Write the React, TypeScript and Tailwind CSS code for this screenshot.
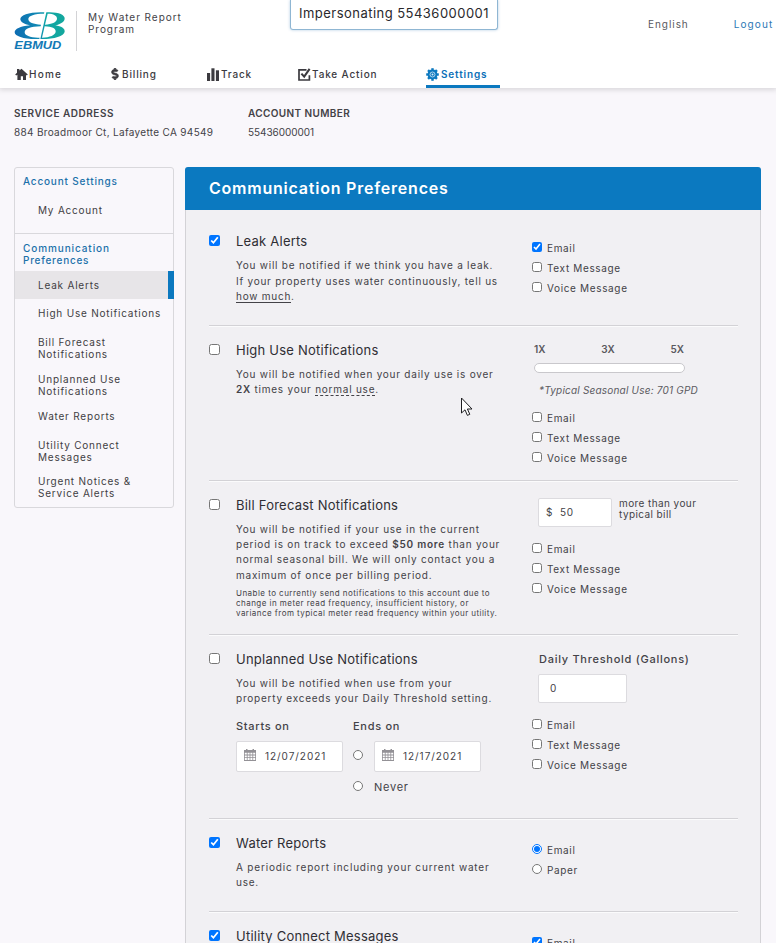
import type { ReactNode } from "react";
import { FaDollarSign } from "react-icons/fa";

const CHECK = "block m-0 h-[11px] w-[11px] shrink-0 accent-[#0075ff]";
const OPTION = "block m-0 h-[10px] w-[10px] shrink-0 accent-[#0075ff]";

function Logo() {
  return (
    <svg className="h-[40px] w-[52px]" viewBox="42 33 156 120">
      <defs>
        <linearGradient id="water" gradientUnits="userSpaceOnUse" x1="44" y1="0" x2="196" y2="0">
          <stop offset="0" stopColor="#0d6cb2" />
          <stop offset="0.5" stopColor="#118cb4" />
          <stop offset="0.62" stopColor="#10a6a6" />
          <stop offset="1" stopColor="#14a79c" />
        </linearGradient>
      </defs>
      <path
        fill="url(#water)"
        d="M133 37 C90 35 61 45 61 57 C61 66 72 72 90 76 C60 79 44 87 44 97 C44 110 76 119 118 117 L119 113 C92 114 74 107 74 97 C74 86 92 80 122 79 L123 74 C100 73 85 67 85 57 C85 47 104 41 132 41 Z"
      />
      <path
        fill="url(#water)"
        fillRule="evenodd"
        d="M139 37 C174 35 195 44 194 56 C193 66 182 72 166 76 C184 79 195 85 194 95 C192 109 160 118 121 117 Z M143 41 L135 74 C156 73 169 67 171 57 C172 47 161 41 143 41 Z M134 79 L126 113 C150 112 166 105 167 95 C168 85 156 80 134 79 Z"
      />
      <text
        x="43"
        y="148"
        textLength="141"
        lengthAdjust="spacingAndGlyphs"
        fontFamily="Liberation Sans, sans-serif"
        fontWeight="700"
        fontStyle="italic"
        fontSize="31"
        fill="#1279b5"
      >
        EBMUD
      </text>
    </svg>
  );
}

function HomeIcon() {
  return (
    <svg className="h-[13px] w-[13px]" viewBox="0 0 13 13" fill="#3b3a3f">
      <path d="M2 1 H4.4 V2.6 L6.5 .8 L12.8 6.4 L11.8 7.4 L11 6.8 V12 H8 V8.2 H5.8 V12 H2.4 V6.8 L1.2 7.4 L.2 6.4 L2 4.7 Z" />
    </svg>
  );
}

function Bars() {
  return (
    <svg className="h-[13px] w-3" viewBox="0 0 12 13" fill="#3b3a3f">
      <rect x="0" y="5" width="3.1" height="8" />
      <rect x="4.4" y="0.3" width="3.1" height="12.7" />
      <rect x="8.9" y="2.3" width="3.1" height="10.7" />
    </svg>
  );
}

function CheckBoxIcon() {
  return (
    <svg className="h-[13px] w-[13px]" viewBox="0 0 13 13" fill="none" stroke="#3b3a3f">
      <path d="M8.5 1.9 H1 V12 H11.4 V7.2" strokeWidth="1.7" />
      <path d="M3.4 5.6 L6.2 8.6 L11.6 .9" strokeWidth="2.1" />
    </svg>
  );
}

function GearIcon() {
  return (
    <svg className="h-[13px] w-[13px]" viewBox="-6.5 -6.5 13 13">
      <g fill="#0b78bf">
        <circle r="4.9" />
        <rect x="-1.2" y="-6.3" width="2.4" height="12.6" />
        <rect x="-6.3" y="-1.2" width="12.6" height="2.4" />
        <rect x="-1.2" y="-6.3" width="2.4" height="12.6" transform="rotate(45)" />
        <rect x="-1.2" y="-6.3" width="2.4" height="12.6" transform="rotate(-45)" />
      </g>
      <circle r="2.5" fill="none" stroke="#d9ebf6" strokeWidth=".8" />
      <circle r="1" fill="#d9ebf6" />
    </svg>
  );
}

function Calendar() {
  return (
    <svg className="-mt-[3px] h-3 w-3 shrink-0" viewBox="0 0 12 12">
      <path fill="#939196" d="M0 1h12v11H0z M2 0h1.5v2H2z M8.5 0H10v2H8.5z" />
      <path
        fill="#fff"
        d="M.8 3.8h2v1.8h-2z M3.6 3.8h2v1.8h-2z M6.4 3.8h2v1.8h-2z M9.2 3.8h2v1.8h-2z M.8 6.4h2v1.8h-2z M3.6 6.4h2v1.8h-2z M6.4 6.4h2v1.8h-2z M9.2 6.4h2v1.8h-2z M.8 9.1h2v1.9h-2z M3.6 9.1h2v1.9h-2z M6.4 9.1h2v1.9h-2z M9.2 9.1h2v1.9h-2z"
      />
    </svg>
  );
}

function Options({ items, checked, radio, group }: { items: string[]; checked?: string; radio?: boolean; group: string }) {
  return (
    <div className="flex flex-col">
      {items.map((item) => (
        <label key={item} className="flex h-5 items-start gap-[5px]">
          <input
            type={radio ? "radio" : "checkbox"}
            name={group}
            defaultChecked={item === checked}
            className={`${OPTION} mt-[4px]`}
          />
          <span className="leading-5 tracking-[0.65px]">{item}</span>
        </label>
      ))}
    </div>
  );
}

function Section({
  title,
  checked,
  className,
  side,
  children,
}: {
  title: string;
  checked?: boolean;
  className: string;
  side: ReactNode;
  children?: ReactNode;
}) {
  return (
    <section className={`flex shrink-0 border-b border-[#d3d2d6] shadow-[0_1px_0_#fbfbfc] ${className}`}>
      <input type="checkbox" defaultChecked={checked} className={`${CHECK} mt-[18px]`} />
      <div className="ml-4 w-[296px] shrink-0">
        <h2 className="pt-[14px] text-[13px] leading-5 font-normal tracking-[0.23px] text-[#2f2e33]">{title}</h2>
        <div className="whitespace-nowrap pt-[7px] leading-[15.2px] tracking-[0.76px]">{children}</div>
      </div>
      <div className="w-[206px] shrink-0">{side}</div>
    </section>
  );
}

const CHANNELS = ["Email", "Text Message", "Voice Message"];
const NAV = "flex items-center gap-[2px] h-[28px]";

function DateBox({ value }: { value: string }) {
  return (
    <div className="flex h-[31px] w-[107px] items-center rounded-[2px] border border-[#dcdbdf] bg-white pl-[7px]">
      <Calendar />
      <span className="ml-[9px] tracking-[0.95px]">{value}</span>
    </div>
  );
}

function SideLink({ children, className }: { children: ReactNode; className: string }) {
  return <a className={`block pl-[23px] leading-3 tracking-[0.79px] text-[#3f3e43] ${className}`}>{children}</a>;
}

export default function App() {
  return (
    <div className="flex h-[943px] w-[776px] flex-col overflow-hidden bg-[#f9f7fb] font-[Inter,'Open_Sans',sans-serif] text-[10px] text-[#434247]">
      <header className="flex h-[88px] shrink-0 flex-col bg-white shadow-[0_1px_5px_1px_rgba(0,0,0,0.13)]">
        <div className="flex h-[60px] items-start">
          <div className="ml-[14px] mt-[11px]">
            <Logo />
          </div>
          <div className="ml-[10px] mt-[11px] h-10 w-px bg-[#d3d3d6]" />
          <div className="ml-[11px] mt-[11px] w-[202px] leading-3 tracking-[0.95px]">
            My Water Report
            <br />
            Program
          </div>
          <div className="flex h-[30px] w-[208px] shrink-0 items-center justify-center rounded-b-[3px] border border-t-0 border-[#8fb6d3] pb-[2px] text-[13px] tracking-[0.47px] text-[#29282c] shadow-[0_0_3px_rgba(80,140,190,0.45)]">
            Impersonating 55436000001
          </div>
          <a className="ml-[150px] mt-[18px] leading-3 tracking-[0.95px] text-[#5a595e]">English</a>
          <a className="ml-[45px] mt-[18px] leading-3 tracking-[1.1px] text-[#2d78b5]">Logout</a>
        </div>
        <nav className="flex font-medium tracking-[0.84px] text-[#3b3a3f]">
          <a className={`${NAV} ml-[15px] w-[94px] gap-px tracking-[1.2px]`}>
            <HomeIcon />
            Home
          </a>
          <a className={`${NAV} w-[98px] gap-px`}>
            <FaDollarSign size={12} stroke="#3b3a3f" strokeWidth={30} />
            Billing
          </a>
          <a className={`${NAV} w-[91px]`}>
            <Bars />
            Track
          </a>
          <a className={`${NAV} w-[128px] gap-px`}>
            <CheckBoxIcon />
            Take Action
          </a>
          <a className={`${NAV} w-[74px] border-b-[3px] border-[#0b78bf] pt-[3px] font-semibold text-[#0b6fb8]`}>
            <GearIcon />
            Settings
          </a>
        </nav>
      </header>

      <div className="flex h-[79px] shrink-0 pl-[14px] pt-[19px]">
        <div className="w-[234px]">
          <div className="leading-3 font-semibold tracking-[0.52px]">SERVICE ADDRESS</div>
          <div className="mt-[7px] leading-3 tracking-[0.32px]">884 Broadmoor Ct, Lafayette CA 94549</div>
        </div>
        <div>
          <div className="leading-3 font-semibold tracking-[0.38px]">ACCOUNT NUMBER</div>
          <div className="mt-[7px] leading-3 tracking-[-0.05px]">55436000001</div>
        </div>
      </div>

      <div className="flex min-h-0 flex-1 items-start">
        <aside className="ml-[14px] flex h-[341px] w-[160px] flex-col rounded-[3px] border border-[#d9d8dc]">
          <div className="h-[66px] border-b border-[#d9d8dc] pt-[7px]">
            <div className="pl-[8px] leading-3 font-medium tracking-[0.82px] text-[#1c71aa]">Account Settings</div>
            <SideLink className="mt-[17px]">My Account</SideLink>
          </div>
          <div className="pl-[8px] pt-[8px] leading-3 font-medium tracking-[0.9px] text-[#1c71aa]">
            Communication
            <br />
            <span className="tracking-[0.75px]">Preferences</span>
          </div>
          <div className="-mr-px mt-[5px] flex h-[28px] shrink-0 items-center justify-between bg-[#e7e5e8]">
            <SideLink className="">Leak Alerts</SideLink>
            <div className="h-full w-[6px] bg-[#0b78bf]" />
          </div>
          <SideLink className="mt-[8px]">High Use Notifications</SideLink>
          <SideLink className="mt-[17px]">
            Bill Forecast
            <br />
            Notifications
          </SideLink>
          <SideLink className="mt-[13px]">
            Unplanned Use
            <br />
            Notifications
          </SideLink>
          <SideLink className="mt-[13px]">Water Reports</SideLink>
          <SideLink className="mt-[17px]">
            Utility Connect
            <br />
            Messages
          </SideLink>
          <SideLink className="mt-[12px]">
            Urgent Notices &amp;
            <br />
            Service Alerts
          </SideLink>
        </aside>

        <main className="ml-[11px] flex h-[776px] w-[576px] shrink-0 flex-col overflow-hidden rounded-t-[3px] bg-[#f1f0f3]">
          <h1 className="flex h-[43px] shrink-0 items-center bg-[#0b79c0] pb-px pl-[24px] text-[16px] font-semibold tracking-[0.78px] text-white">
            Communication Preferences
          </h1>
          <div className="flex min-h-0 flex-1 flex-col border-x border-[#d3d2d6] pl-[23px] pr-[22px] pt-[7px]">
            <Section
              title="Leak Alerts"
              checked
              className="h-[109px]"
              side={
                <div className="pt-[21px]">
                  <Options items={CHANNELS} checked="Email" group="leak" />
                </div>
              }
            >
              You will be notified if we think you have a leak.
              <br />
              <span className="relative top-px">If your property uses water continuously, tell us</span>
              <br />
              <span className="relative top-px">
                <span className="inline-block border-b border-[#434247] leading-[11px]">how much</span>.
              </span>
            </Section>

            <Section
              title="High Use Notifications"
              className="h-[155px]"
              side={
                <div className="pt-[17px]">
                  <div className="flex w-[152px] justify-between pl-[2px] leading-3 font-semibold text-[#59585d]">
                    <span>1X</span>
                    <span>3X</span>
                    <span>5X</span>
                  </div>
                  <div className="ml-[2px] mt-[8px] h-[10px] w-[151px] rounded-full border border-[#c9c8cc] bg-white" />
                  <div className="ml-[7px] mt-[10px] h-[14px] leading-[14px] italic tracking-[0.2px] text-[#5b5a5f]">
                    *Typical Seasonal Use: 701 GPD
                  </div>
                  <div className="pt-[11px]">
                    <Options items={CHANNELS} group="high" />
                  </div>
                </div>
              }
            >
              You will be notified when your daily use is over
              <br />
              <b className="font-semibold">2X</b> times your{" "}
              <span className="inline-block border-b border-dashed border-[#434247] leading-[11px]">normal use</span>.
            </Section>

            <Section
              title="Bill Forecast Notifications"
              className="h-[154px]"
              side={
                <div className="pt-[17px]">
                  <div className="flex">
                    <div className="ml-[6px] flex h-[29px] w-[74px] items-center gap-[7px] rounded-[2px] border border-[#dcdbdf] bg-white pl-[7px] tracking-[0.6px]">
                      <span>$</span>
                      <span>50</span>
                    </div>
                    <div className="ml-[7px] leading-[11px] tracking-[0.41px]">
                      more than your
                      <br />
                      typical bill
                    </div>
                  </div>
                  <div className="pt-[12px]">
                    <Options items={CHANNELS} group="bill" />
                  </div>
                </div>
              }
            >
              You will be notified if your use in the current
              <br />
              period is on track to exceed <b className="font-semibold">$50 more</b> than your
              <br />
              normal seasonal bill. We will only contact you a
              <br />
              maximum of once per billing period.
              <div className="mt-[5px] text-[8px] leading-[10px] tracking-[0.46px]">
                Unable to currently send notifications to this account due to
                <br />
                change in meter read frequency, insufficient history, or
                <br />
                variance from typical meter read frequency within your utility.
              </div>
            </Section>

            <Section
              title="Unplanned Use Notifications"
              className="h-[184px]"
              side={
                <div className="pt-[16px]">
                  <div className="ml-[7px] text-[11px] leading-4 font-medium tracking-[0.73px]">
                    Daily Threshold (Gallons)
                  </div>
                  <div className="ml-[6px] mt-[7px] flex h-[29px] w-[89px] items-center rounded-[2px] border border-[#dcdbdf] bg-white pl-[11px]">
                    0
                  </div>
                  <div className="pt-[12px]">
                    <Options items={CHANNELS} group="unplanned" />
                  </div>
                </div>
              }
            >
              You will be notified when use from your
              <br />
              property exceeds your Daily Threshold setting.
              <div className="mt-[12px] flex text-[11px] leading-4 font-medium tracking-[0.7px]">
                <span className="w-[117px]">Starts on</span>
                <span>Ends on</span>
              </div>
              <div className="mt-[7px] flex items-center">
                <DateBox value="12/07/2021" />
                <input type="radio" name="end" className={`${OPTION} -mt-[4px] ml-[10px]`} />
                <div className="ml-[11px]">
                  <DateBox value="12/17/2021" />
                </div>
              </div>
              <div className="mt-[7px] flex items-center">
                <input type="radio" name="end" className={`${OPTION} -mt-[2px] ml-[117px]`} />
                <span className="ml-[11px] text-[11px] leading-4 tracking-[0.74px]">Never</span>
              </div>
            </Section>

            <Section
              title="Water Reports"
              checked
              className="h-[93px]"
              side={
                <div className="pt-[21px]">
                  <Options items={["Email", "Paper"]} checked="Email" radio group="reports" />
                </div>
              }
            >
              <span className="tracking-[0.82px]">A periodic report including your current water</span>
              <br />
              use.
            </Section>

            <Section
              title="Utility Connect Messages"
              checked
              className="h-[109px]"
              side={
                <div className="pt-[21px]">
                  <Options items={CHANNELS} checked="Email" group="utility" />
                </div>
              }
            />
          </div>
        </main>
      </div>

      <svg className="absolute left-[460px] top-[397px] h-5 w-[14px]" viewBox="0 0 14 20">
        <path
          d="M1.5 1 V16 L5 12.8 L7.4 18.4 L9.8 17.3 L7.4 12 H12 Z"
          fill="#fff"
          stroke="#1f1f22"
          strokeWidth="1"
        />
      </svg>
    </div>
  );
}
